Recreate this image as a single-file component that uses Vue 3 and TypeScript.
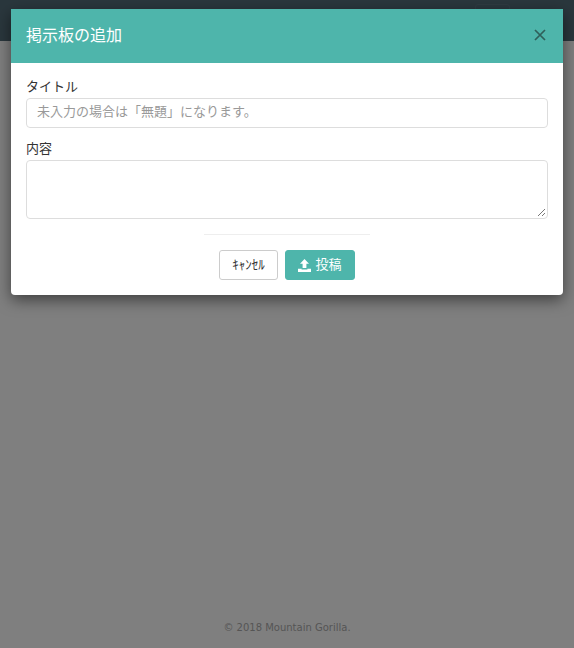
<script setup lang="ts">
const title = '掲示板の追加'
</script>
<template>
  <div class="page">
    <div class="topbar"><span class="ghost"></span></div>
    <div class="overlay"></div>
    <div class="modal">
      <div class="head">
        <span class="title">{{ title }}</span>
        <svg class="close" width="12" height="12" viewBox="0 0 12 12"><path d="M1 1 L11 11 M11 1 L1 11" stroke="#2f5f5a" stroke-width="1.7" fill="none"/></svg>
      </div>
      <div class="body">
        <label class="lab">タイトル</label>
        <div class="input">未入力の場合は「無題」になります。</div>
        <label class="lab second">内容</label>
        <div class="area">
          <svg class="grip" width="10" height="10" viewBox="0 0 10 10"><path d="M9 2 L2 9 M9 6 L6 9" stroke="#777" stroke-width="1" fill="none"/></svg>
        </div>
      </div>
      <div class="foot">
        <div class="rule"></div>
        <div class="btns">
          <button class="btn cancel">ｷｬﾝｾﾙ</button>
          <button class="btn post">
            <svg width="13" height="13" viewBox="0 0 13 13"><path fill="#fff" d="M6.5 0 L11 4.8 H8.4 V9 H4.6 V4.8 H2 Z M0 9.8 H3.6 V10.6 H9.4 V9.8 H13 V13 H0 Z"/></svg>
            投稿
          </button>
        </div>
      </div>
    </div>
    <div class="copy">© 2018 Mountain Gorilla.</div>
  </div>
</template>
<style>
html, body { margin: 0; }
</style>
<style scoped>
.page { position: relative; width: 574px; height: 648px; overflow: hidden; background: #fff; font-family: "Noto Sans CJK JP", "Noto Sans", sans-serif; color: #333; display: flex; flex-direction: column; }
.topbar { position: relative; height: 41px; background: #556e7b; }
.ghost { position: absolute; left: 475px; top: 4px; width: 35px; height: 30px; border: 1px solid #5f7784; border-radius: 3px; box-sizing: border-box; }
.overlay { position: absolute; inset: 0; background: rgba(0,0,0,.5); }
.modal { position: absolute; left: 11px; top: 9px; width: 552px; height: 286px; background: #fff; border-radius: 0 0 4px 4px; box-shadow: 0 5px 15px rgba(0,0,0,.5); overflow: hidden; }
.head { height: 54px; background: #4eb5ab; display: flex; align-items: center; justify-content: space-between; padding: 0 17px 5px 15px; box-sizing: border-box; }
.title { color: #fff; font-size: 16px; }
.close { margin-top: 3px; }
.body { padding: 13px 15px 0; }
.lab { display: block; font-size: 13px; line-height: 20px; color: #333; }
.second { margin-top: 10px; }
.input { height: 28px; border: 1px solid #ddd; border-radius: 4px; line-height: 23px; padding: 0 10px; font-size: 13px; color: #999; margin-top: 2px; }
.area { position: relative; height: 57px; border: 1px solid #ddd; border-radius: 4px; margin-top: 2px; }
.grip { position: absolute; right: 1px; bottom: 1px; }
.foot { display: flex; flex-direction: column; align-items: center; margin-top: 15px; }
.rule { width: 166px; border-top: 1px solid #eee; }
.btns { display: flex; gap: 7px; margin-top: 15px; }
.btn { height: 30px; border-radius: 3px; font-size: 13px; font-family: inherit; display: flex; align-items: center; justify-content: center; gap: 4px; padding: 0 0 4px; }
.btn svg { margin-top: 4px; }
.cancel { width: 59px; background: #fff; border: 1px solid #ccc; color: #333; }
.post { width: 70px; background: #4eb5ab; border: 1px solid #4eb5ab; color: #fff; }
.copy { position: absolute; left: 0; right: 0; top: 622px; text-align: center; font-size: 10px; color: #555; font-family: "DejaVu Sans", sans-serif; }
</style>
